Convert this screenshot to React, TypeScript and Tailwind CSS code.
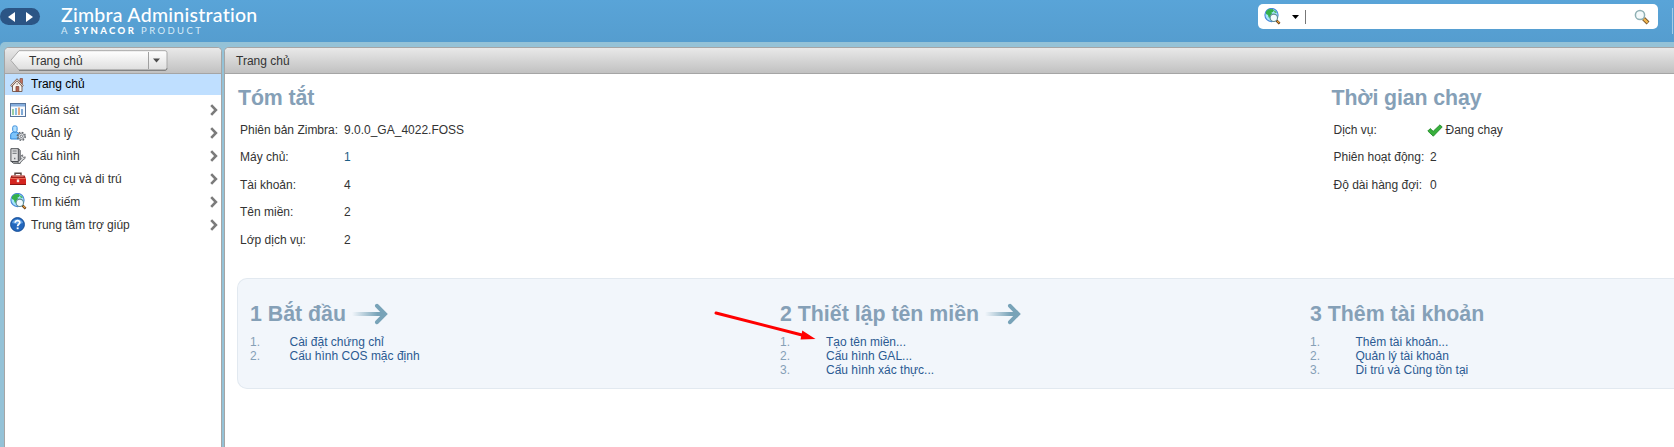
import React from "react";

function GlobeIcon() {
  return (
    <svg width="17" height="17" viewBox="0 0 17 17" className="block shrink-0">
      <circle cx="7.5" cy="7" r="6.6" fill="#a5e6fb" stroke="#4a86d8" strokeWidth="1.1" />
      <path d="M2 3.5 4.5 1.3 8.5 1 10 2.2 9 4 7.5 4.5 8 6 6 8 5.5 10.5 4.5 9 4 7 2 6Z" fill="#35b04a" />
      <path d="M10.5 2.2 13 4.5 11.5 5 10 4Z" fill="#45b95c" />
      <circle cx="9.8" cy="9.8" r="3.7" fill="#f3fbfe" stroke="#5d8c92" strokeWidth="1.1" />
      <path d="m12.6 12.6 3 3" stroke="#5a3210" strokeWidth="2.4" />
      <path d="m13.2 13 2 2" stroke="#e9a33c" strokeWidth="1.1" />
    </svg>
  );
}

function HomeIcon() {
  return (
    <svg width="16" height="16" viewBox="0 0 16 16" className="block shrink-0">
      <path d="M10 1.5h2.5v5H10z" fill="#c4705f" stroke="#8a5a4c" strokeWidth=".8" />
      <path d="M2.5 8 7 3.2l5 4.8v6.5H2.5Z" fill="#f8f4ef" stroke="#7a6258" strokeWidth="1" />
      <path d="M1 9.2 7 2.8l6 6.4" fill="none" stroke="#7d6054" strokeWidth="2.2" />
      <path d="M1.2 8.9 7 2.8l5.8 6.1" fill="none" stroke="#efe5dd" strokeWidth=".9" />
      <path d="M6 9.5h2.8v5H6z" fill="#b5604e" stroke="#7b4a3d" strokeWidth=".8" />
      <circle cx="7.2" cy="7" r=".9" fill="#b5aaa3" />
    </svg>
  );
}

function MonitorIcon() {
  return (
    <svg width="16" height="14" viewBox="0 0 16 14" className="block shrink-0">
      <rect x=".5" y=".5" width="15" height="13" fill="#f7fafd" stroke="#56749c" />
      <path d="M1 1h14v2.5H1z" fill="#86aedd" />
      <path d="M2 6h2v6H2z" fill="#9bcda0" />
      <path d="M5 5h2v7H5z" fill="#8abde4" />
      <path d="M8 4.5h2V12H8z" fill="#e6a87d" />
      <path d="M11 6h2v6h-2z" fill="#7fa9d6" />
    </svg>
  );
}

function UserIcon() {
  return (
    <svg width="16" height="16" viewBox="0 0 16 16" className="block shrink-0">
      <path d="M.7 14V9.5Q1 7.5 3.5 7.2h3Q9 7.5 9.2 10v4Z" fill="#7cc4fb" stroke="#2f86d8" />
      <rect x="2.7" y=".9" width="4.4" height="6" rx="1.5" fill="#b4e0fe" stroke="#3b8fdd" />
      <circle cx="11.3" cy="11.3" r="4" fill="none" stroke="#63686e" strokeWidth="1.4" strokeDasharray="1.7 1.44" />
      <circle cx="11.3" cy="11.3" r="3.1" fill="#e3e5e8" stroke="#70757b" strokeWidth=".9" />
      <circle cx="11.3" cy="11.3" r="1.2" fill="#fff" stroke="#63686e" strokeWidth=".9" />
    </svg>
  );
}

function ServerIcon() {
  return (
    <svg width="16" height="16" viewBox="0 0 16 16" className="block shrink-0">
      <path d="m8.5.7 1.7 1.8v12.8H3.5l-2-1.6Z" fill="#a9abad" stroke="#4b4e52" strokeWidth=".9" />
      <path d="M.9.7h7.4v12.8H.9z" fill="#e1e2e3" stroke="#4b4e52" />
      <path d="M2.5 3h4.2M2.5 5.3h4.2" stroke="#6c7074" />
      <path d="M4 9.8h1.4v1.4H4z" fill="#717579" />
      <path d="m9 14.4 3.6-3.6" stroke="#66696d" strokeWidth="2.8" strokeLinecap="round" />
      <path d="M15.2 8.8a2.3 2.3 0 1 1-2.5-1.9v2l1 .6Z" fill="#e5e6e7" stroke="#66696d" strokeWidth=".9" />
      <path d="m9.2 14.2 3.3-3.3" stroke="#e9eaeb" strokeWidth="1.3" strokeLinecap="round" />
    </svg>
  );
}

function ToolboxIcon() {
  return (
    <svg width="16" height="14" viewBox="0 0 16 14" className="block shrink-0">
      <path d="M5 3.5V1.3h6v2.2" fill="none" stroke="#57433e" strokeWidth="1.4" />
      <path d="M1.3 3.5h13.4L16 7H0Z" fill="#a31f1c" />
      <path d="M2.4 4.2h11.2" stroke="#e08678" />
      <path d="M0 6h16v7H0z" fill="#d42520" />
      <path d="M0 6.5h16" stroke="#ef6a57" />
      <path d="M0 12.5h16" stroke="#8d1613" />
      <path d="M6.8 7.4h2.4v2.8H6.8z" fill="#f9e7e4" />
    </svg>
  );
}

function HelpIcon() {
  return (
    <svg width="15" height="15" viewBox="0 0 15 15" className="block shrink-0">
      <circle cx="7.5" cy="7.5" r="6.9" fill="#2367bd" stroke="#174e96" />
      <path d="M2 6a5.7 5 0 0 1 11 0Q8 8 2 6Z" fill="#5b9be0" />
      <path d="M5.2 5.8C5.2 2.8 10 3 9.8 5.8 9.7 7.3 7.6 7.3 7.6 9.2" fill="none" stroke="#fff" strokeWidth="1.7" />
      <path d="M6.7 10.4h1.9v1.8H6.7z" fill="#fff" />
    </svg>
  );
}

function Chevron() {
  return (
    <svg width="8" height="12" viewBox="0 0 8 12" className="block">
      <path d="m1.2 1.2 4.7 4.8-4.7 4.8" fill="none" stroke="#7b7b7b" strokeWidth="2.6" />
    </svg>
  );
}

function StepArrow({ id }: { id: string }) {
  return (
    <svg width="36" height="22" viewBox="0 0 36 22" className="block">
      <defs>
        <linearGradient id={id} x1="0" x2="1" y1="0" y2="0">
          <stop offset="0" stopColor="#78a3b8" stopOpacity="0" />
          <stop offset=".8" stopColor="#78a3b8" />
        </linearGradient>
      </defs>
      <path d="M0 9h32v4H0z" fill={`url(#${id})`} />
      <path d="m25 2.8 8 8.2-8 8.2" fill="none" stroke="#78a3b8" strokeWidth="4" strokeLinecap="round" />
    </svg>
  );
}

const nav = [
  { label: "Giám sát", icon: <MonitorIcon /> },
  { label: "Quản lý", icon: <UserIcon /> },
  { label: "Cấu hình", icon: <ServerIcon /> },
  { label: "Công cụ và di trú", icon: <ToolboxIcon /> },
  { label: "Tìm kiếm", icon: <GlobeIcon /> },
  { label: "Trung tâm trợ giúp", icon: <HelpIcon /> },
];

const summary = [
  ["Phiên bản Zimbra:", "9.0.0_GA_4022.FOSS"],
  ["Máy chủ:", "1"],
  ["Tài khoản:", "4"],
  ["Tên miền:", "2"],
  ["Lớp dịch vụ:", "2"],
];

const steps = [
  { title: "1 Bắt đầu", arrow: true, width: "w-[530px]", indent: "w-[39.5px]", items: ["Cài đặt chứng chỉ", "Cấu hình COS mặc định"] },
  { title: "2 Thiết lập tên miền", arrow: true, width: "w-[530px]", indent: "w-[46px]", items: ["Tạo tên miền...", "Cấu hình GAL...", "Cấu hình xác thực..."] },
  { title: "3 Thêm tài khoản", arrow: false, width: "w-[400px]", indent: "w-[45.5px]", items: ["Thêm tài khoản...", "Quản lý tài khoản", "Di trú và Cùng tồn tại"] },
];

const bar = "h-[26px] border-b border-[#a5a5a5] bg-gradient-to-b from-[#e9e9e9] to-[#c1c1c1]";
const title = "text-[21.33px] leading-6 font-bold whitespace-nowrap text-[#85a0b7]";

function Header() {
  return (
    <header className="flex h-[42px] shrink-0 items-start bg-gradient-to-b from-[#59a4d8] to-[#559dcf]">
      <div className="mt-2 flex h-[17px] w-10 items-center justify-center gap-[11px] rounded-full bg-[#2b5585]">
        <svg width="7" height="10" viewBox="0 0 7 10"><path d="M7 0v10L0 5Z" fill="#fff" /></svg>
        <svg width="7" height="10" viewBox="0 0 7 10"><path d="M0 0v10l7-5Z" fill="#fff" /></svg>
      </div>
      <div className="ml-[21px] w-[240px] pt-[3px] font-[Lato,sans-serif] whitespace-nowrap text-white">
        <div className="text-[19.5px] leading-[23px] font-medium tracking-[0.26px]">Zimbra Administration</div>
        <div className="text-[9.5px] leading-[9px] tracking-[2.4px] text-[#d9ebf7]">
          A <b className="font-black text-white">SYNACOR</b> PRODUCT
        </div>
      </div>
      <div className="mt-1 ml-auto flex h-[25px] w-[400px] items-center rounded-[5px] bg-white pr-2 pl-[6px]">
        <GlobeIcon />
        <svg width="7" height="4" viewBox="0 0 7 4" className="ml-[11px]"><path d="M0 0h7L3.5 4Z" fill="#000" /></svg>
        <span className="ml-[6px] h-[14px] w-px bg-[#777]" />
        <svg width="16" height="16" viewBox="0 0 16 16" className="ml-auto">
          <path d="m9.5 9.5 4.5 4.5" stroke="#6b4a24" strokeWidth="4" />
          <path d="m9.8 9.8 3.8 3.8" stroke="#f0b64f" strokeWidth="2.4" />
          <circle cx="6" cy="6" r="4.6" fill="#f4fafb" stroke="#8fb0b4" strokeWidth="1.5" />
        </svg>
      </div>
      <span className="mt-2 mr-px ml-[14px] h-[26px] w-px bg-[#a5cde8]" />
    </header>
  );
}

function Sidebar() {
  return (
    <aside className="flex w-[218px] shrink-0 flex-col rounded-t-[5px] border border-b-0 border-[#a5a5a5] bg-white">
      <div className={`${bar} flex items-start rounded-t-[4px] pt-[2px] pl-[4.5px]`}>
        <div className="relative flex h-[22px] w-[158px]">
          <svg width="158" height="22" viewBox="0 0 158 22" className="absolute top-0 left-0">
            <defs>
              <linearGradient id="crumb" x1="0" x2="0" y1="0" y2="1">
                <stop offset="0" stopColor="#fff" />
                <stop offset="1" stopColor="#dedede" />
              </linearGradient>
            </defs>
            <path d="M9 .7H155a2 2 0 0 1 2 2V18a2 2 0 0 1-2 2H9L.8 10.3Z" fill="url(#crumb)" stroke="#a8a8a8" />
            <path d="M9 20.3H155.5q1.5-.5 1.5-2" fill="none" stroke="#777" />
            <path d="M138.5 2v17" stroke="#a0a0a0" />
            <path d="M143 8.5h7l-3.5 4Z" fill="#4c4c4c" />
          </svg>
          <span className="relative pl-[19.5px] leading-[22px]">Trang chủ</span>
        </div>
      </div>
      <div className="mb-[3px] flex h-[21px] items-center bg-[#bfdfff] pl-[5px] text-black">
        <HomeIcon />
        <span className="ml-[5px] pb-px">Trang chủ</span>
      </div>
      {nav.map((n) => (
        <div key={n.label} className="flex h-[23px] items-center pr-[3px] pl-[5px]">
          <span className="flex w-[17px] items-center">{n.icon}</span>
          <span className="ml-1 grow whitespace-nowrap">{n.label}</span>
          <Chevron />
        </div>
      ))}
    </aside>
  );
}

function Content() {
  return (
    <main className="flex min-w-0 grow flex-col overflow-hidden rounded-tl-[5px] border-t border-l border-[#a5a5a5] bg-white">
      <div className={`${bar} shrink-0 pl-[11px] leading-[26px]`}>Trang chủ</div>
      <div className="flex h-[204px] shrink-0 pt-[12px]">
        <section className="w-[1093.5px] pl-[13px]">
          <h2 className={`${title} tracking-[-0.1px]`}>Tóm tắt</h2>
          <dl className="mt-[6px] pl-[2px]">
            {summary.map(([k, v]) => (
              <div key={k} className="flex h-[27.5px] items-center">
                <dt className="w-[104px] whitespace-nowrap">{k}</dt>
                <dd className={k === "Máy chủ:" ? "text-[#1d6086]" : ""}>{v}</dd>
              </div>
            ))}
          </dl>
        </section>
        <section className="pl-[13px]">
          <h2 className={`${title} tracking-[-0.1px]`}>Thời gian chạy</h2>
          <dl className="mt-[6px] pl-[2px]">
            <div className="flex h-[27.5px] items-center">
              <dt className="w-[93.5px]">Dịch vụ:</dt>
              <dd className="flex items-center">
                <svg width="16" height="13" viewBox="0 0 16 13" className="mt-[2px] mr-[2.5px]">
                  <path d="m.8 7 2.4-2.4 3 2.7L13 .8 15.2 3 6.3 12.2Z" fill="#38b03c" stroke="#258c2b" strokeWidth=".9" />
                </svg>
                Đang chạy
              </dd>
            </div>
            <div className="flex h-[27.5px] items-center"><dt className="w-[96.5px] whitespace-nowrap">Phiên hoạt động:</dt><dd>2</dd></div>
            <div className="flex h-[27.5px] items-center"><dt className="w-[96.5px] whitespace-nowrap">Độ dài hàng đợi:</dt><dd>0</dd></div>
          </dl>
        </section>
      </div>
      <div className="relative ml-[12px] flex h-[111px] shrink-0 rounded-l-[10px] border border-r-0 border-[#e2e9f0] bg-[#f2f6fb] pt-[23px] pl-[12px]">
        {steps.map((s, i) => (
          <section key={s.title} className={`${s.width} shrink-0`}>
            <div className="flex items-center gap-[6px]">
              <h2 className={title}>{s.title}</h2>
              {s.arrow && <StepArrow id={`step${i}`} />}
            </div>
            <ol className="mt-[9px]">
              {s.items.map((t, n) => (
                <li key={t} className="flex h-[14px] leading-[14px]">
                  <span className={`${s.indent} text-[#85a0b7]`}>{n + 1}.</span>
                  <a className="whitespace-nowrap text-[#2b5a92]">{t}</a>
                </li>
              ))}
            </ol>
          </section>
        ))}
        <svg width="106" height="32" viewBox="0 0 106 32" className="absolute top-[31px] left-[474px]">
          <path d="M4 3 90 25" stroke="#f00" strokeWidth="3" strokeLinecap="round" />
          <path d="M90.3 20.5 103.5 29 88.5 29.4Z" fill="#f00" />
        </svg>
      </div>
    </main>
  );
}

export default function App() {
  return (
    <div className="flex h-[447px] w-full flex-col overflow-hidden bg-[#559dcf] font-['Liberation_Sans',Arial,sans-serif] text-[12px] leading-[14px] text-[#333]">
      <Header />
      <div className="flex min-h-0 grow gap-[2px] rounded-tl-[5px] bg-[#94c2d7] pt-[5px] pl-[4px]">
        <Sidebar />
        <Content />
      </div>
    </div>
  );
}
